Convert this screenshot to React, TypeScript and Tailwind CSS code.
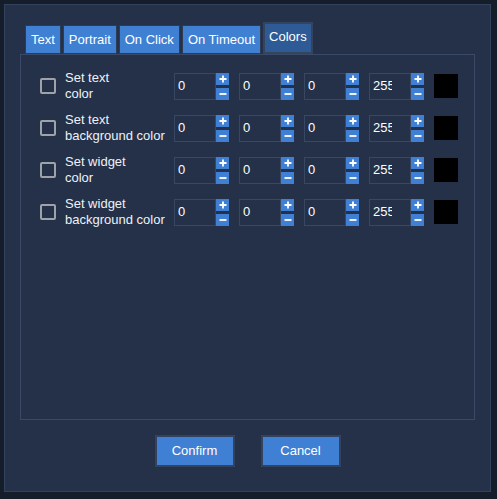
import React from 'react';

const tabs = ['Text', 'Portrait', 'On Click', 'On Timeout'];

const rows = [
  ['Set text', 'color'],
  ['Set text', 'background color'],
  ['Set widget', 'color'],
  ['Set widget', 'background color'],
];

function SpinBox({ value }: { value: string }) {
  return (
    <div className="flex h-[27px] w-[55px]">
      <div className="w-[42px] h-full border border-[#384862] flex items-center pl-[3px]">
        <span className="block w-[19px] overflow-hidden whitespace-nowrap text-white">{value}</span>
      </div>
      <div className="flex flex-col justify-between w-[13px] h-full">
        <div className="h-[12px] bg-[#3f80d4] flex items-center justify-center">
          <svg width="8" height="8" viewBox="0 0 8 8">
            <path d="M4 0.5V7.5M0.5 4H7.5" stroke="#fff" strokeWidth="1.8" />
          </svg>
        </div>
        <div className="h-[12px] bg-[#3f80d4] flex items-center justify-center">
          <svg width="8" height="8" viewBox="0 0 8 8">
            <path d="M0.5 4H7.5" stroke="#fff" strokeWidth="1.8" />
          </svg>
        </div>
      </div>
    </div>
  );
}

export default function App() {
  return (
    <div
      className="w-[497px] h-[499px] bg-[#161d2a] pl-[4px] pt-[4px] text-[13px] text-[#eef1f6]"
      style={{ fontFamily: '"Liberation Sans", Arial, sans-serif' }}
    >
      <div className="w-[487px] h-[488px] bg-[#243149] border border-[#34435d] px-[15px] pt-[17px] flex flex-col">
        {/* Tabs */}
        <div className="flex items-end h-[32px] pl-[5px] gap-[2px]">
          {tabs.map((t) => (
            <div
              key={t}
              className="h-[29px] border border-[#2d3b54] bg-[#4080d2] px-[5px] flex items-center text-white"
            >
              {t}
            </div>
          ))}
          <div className="h-[32px] border-2 border-[#34445e] bg-[#2e5a95] px-[4px] flex items-center pb-[2px] text-white">
            Colors
          </div>
        </div>

        {/* Content */}
        <div className="w-[455px] h-[366px] border border-[#3a4a66] pt-[10px] pl-[19px]">
          {rows.map((r, i) => (
            <div key={i} className="flex items-center h-[42px]">
              <div className="w-[16px] h-[16px] border-2 border-[#9ea3aa] rounded-[2px]" />
              <div className="w-[109px] ml-[9px] leading-[16px]">
                <div>{r[0]}</div>
                <div>{r[1]}</div>
              </div>
              <div className="flex gap-[10px] items-center">
                <SpinBox value="0" />
                <SpinBox value="0" />
                <SpinBox value="0" />
                <SpinBox value="255" />
                <div className="w-[24px] h-[24px] bg-black" />
              </div>
            </div>
          ))}
        </div>

        {/* Buttons */}
        <div className="flex justify-center gap-[26px] mt-[15px]">
          <button className="w-[80px] h-[32px] border-2 border-[#33435e] bg-[#3f80d4] text-white">
            Confirm
          </button>
          <button className="w-[80px] h-[32px] border-2 border-[#33435e] bg-[#3f80d4] text-white">
            Cancel
          </button>
        </div>
      </div>
    </div>
  );
}
